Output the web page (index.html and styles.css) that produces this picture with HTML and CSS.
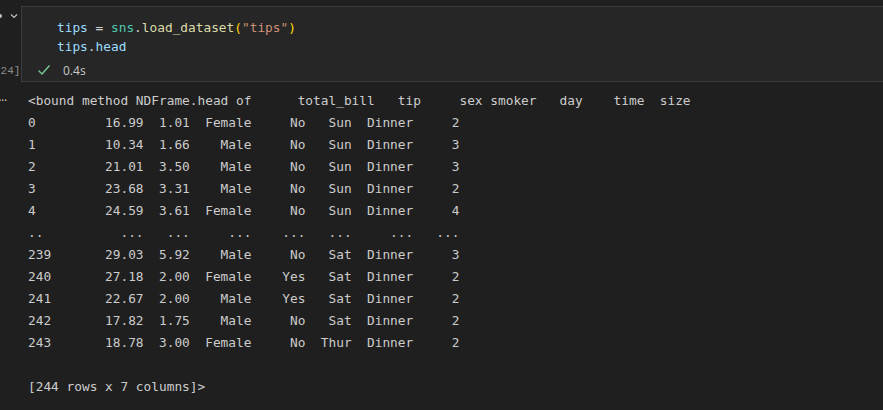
FILE: index.html
```html
<!DOCTYPE html>
<html>
<head>
<meta charset="utf-8">
<link rel="stylesheet" href="styles.css">
</head>
<body>
<div class="cell-row">
  <div class="gutter">
    <div class="gutter-top">
      <span class="dot"></span>
      <svg class="chev" width="8" height="6" viewBox="0 0 8 6"><path d="M1 1.5 L4 4.5 L7 1.5" fill="none" stroke="#c5c5c5" stroke-width="1.1"/></svg>
    </div>
    <div class="exec-count">[24]</div>
  </div>
  <div class="cell">
    <div class="code"><div class="line"><span class="var">tips</span> <span class="op">=</span> <span class="mod">sns</span><span class="op">.</span><span class="fn">load_dataset</span><span class="br">(</span><span class="str">"tips"</span><span class="br">)</span></div><div class="line"><span class="var">tips</span><span class="op">.</span><span class="var">head</span></div></div>
    <div class="status">
      <svg class="check" width="14" height="12" viewBox="0 0 14 12"><path d="M1.5 6.5 L5 10 L12.5 1.5" fill="none" stroke="#73c991" stroke-width="1.4"/></svg>
      <span class="time">0.4s</span>
    </div>
  </div>
</div>
<div class="out-row">
  <div class="out-gutter">···</div>
<pre class="output">&lt;bound method NDFrame.head of      total_bill   tip     sex smoker   day    time  size
0         16.99  1.01  Female     No   Sun  Dinner     2
1         10.34  1.66    Male     No   Sun  Dinner     3
2         21.01  3.50    Male     No   Sun  Dinner     3
3         23.68  3.31    Male     No   Sun  Dinner     2
4         24.59  3.61  Female     No   Sun  Dinner     4
..          ...   ...     ...    ...   ...     ...   ...
239       29.03  5.92    Male     No   Sat  Dinner     3
240       27.18  2.00  Female    Yes   Sat  Dinner     2
241       22.67  2.00    Male    Yes   Sat  Dinner     2
242       17.82  1.75    Male     No   Sat  Dinner     2
243       18.78  3.00  Female     No  Thur  Dinner     2

[244 rows x 7 columns]&gt;</pre>
</div>
</body>
</html>
```

FILE: styles.css
```css
html, body {
  margin: 0;
  padding: 0;
  background: #1f1f1f;
  overflow: hidden;
}

.cell-row {
  display: flex;
  padding-top: 6px;
}

.gutter {
  width: 21px;
  flex: none;
  display: flex;
  flex-direction: column;
  overflow: hidden;
}

.gutter-top {
  display: flex;
  align-items: center;
  height: 20px;
  margin-left: -2px;
  gap: 8px;
}

.dot {
  width: 4px;
  height: 4px;
  border-radius: 50%;
  background: #c5c5c5;
}

.chev {
  display: block;
}

.exec-count {
  margin-top: 38px;
  margin-left: -6px;
  font-family: "Liberation Mono", monospace;
  font-size: 11px;
  color: #8b8b8b;
  line-height: 14px;
  white-space: nowrap;
}

.cell {
  flex: 1;
  background: #262626;
  border: 1px solid #3b3b40;
  border-right: none;
  height: 74px;
}

.code {
  padding: 11px 0 0 35px;
  font-family: "DejaVu Sans Mono", monospace;
  font-size: 12.8px;
  line-height: 19px;
  color: #d4d4d4;
  white-space: pre;
}

.var { color: #9cdcfe; }
.op { color: #d4d4d4; }
.mod { color: #4ec9b0; }
.fn { color: #dcdcaa; }
.br { color: #ffd700; }
.str { color: #ce9178; }

.status {
  display: flex;
  align-items: center;
  height: 22px;
  margin-top: 3px;
  padding-left: 15px;
}

.check {
  display: block;
}

.time {
  margin-left: 12px;
  font-family: "Open Sans", "Noto Sans", sans-serif;
  font-size: 12px;
  color: #c8c8c8;
}

.out-row {
  display: flex;
  margin-top: 8px;
}

.out-gutter {
  width: 30px;
  flex: none;
  font-family: "DejaVu Sans", sans-serif;
  font-size: 12px;
  line-height: 22px;
  color: #c5c5c5;
  margin-left: -2px;
  letter-spacing: -1px;
}

.output {
  margin: 0;
  font-family: "DejaVu Sans Mono", monospace;
  font-size: 12.8px;
  line-height: 22px;
  color: #cccccc;
}
```
